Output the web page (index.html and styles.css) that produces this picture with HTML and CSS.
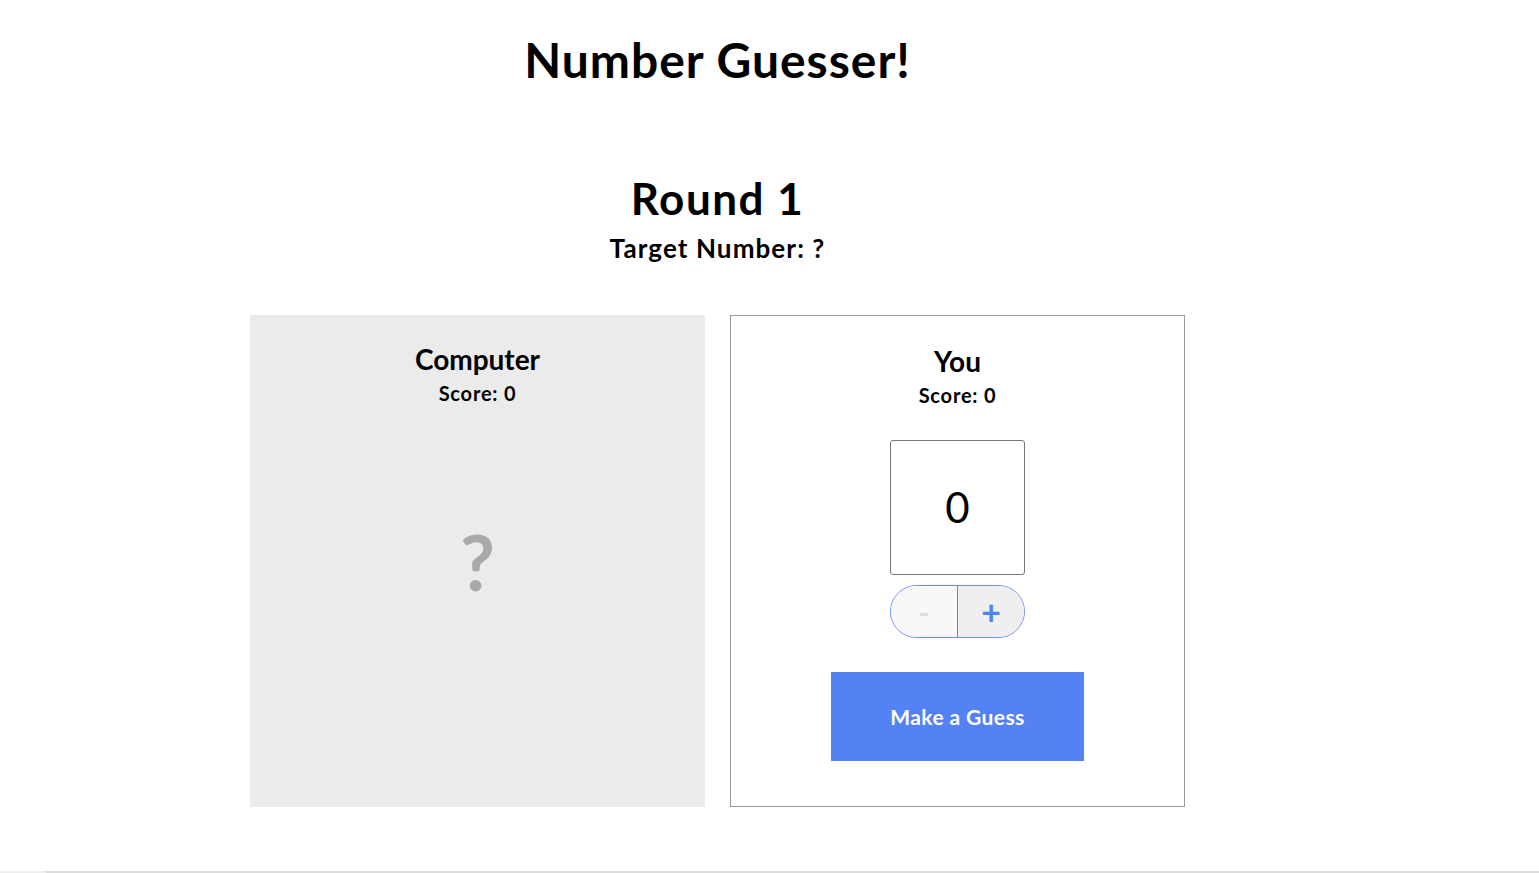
FILE: index.html
```html
<!DOCTYPE html>
<html lang="en">
<head>
<meta charset="utf-8">
<title>Number Guesser!</title>
<link rel="stylesheet" href="styles.css">
</head>
<body>
<div class="page">
  <h1 class="title">Number Guesser!</h1>
  <section class="round">
    <h2 class="round-title">Round 1</h2>
    <p class="target">Target Number: ?</p>
  </section>
  <section class="players">
    <div class="card card-computer">
      <h3 class="card-name">Computer</h3>
      <p class="card-score">Score: 0</p>
      <div class="computer-guess">?</div>
    </div>
    <div class="card card-human">
      <h3 class="card-name">You</h3>
      <p class="card-score">Score: 0</p>
      <input class="guess-input" type="text" value="0">
      <div class="stepper">
        <button class="step step-minus" type="button">-</button>
        <button class="step step-plus" type="button">+</button>
      </div>
      <button class="guess-btn" type="button">Make a Guess</button>
    </div>
  </section>
</div>
<div class="bottom-rule"><span class="rule-start"></span><span class="rule-rest"></span></div>
</body>
</html>
```
FILE: styles.css
```css
html, body {
  margin: 0;
  padding: 0;
  background: #fff;
}
body {
  font-family: "Lato", "Noto Sans", sans-serif;
  color: #000;
  overflow: hidden;
  height: 873px;
}
.page {
  width: 1435px;
  display: flex;
  flex-direction: column;
  align-items: center;
}
.title {
  margin: 31px 0 0;
  font-size: 48px;
  line-height: 58px;
  font-weight: 700;
  letter-spacing: 1px;
}
.round {
  margin-top: 85px;
  display: flex;
  flex-direction: column;
  align-items: center;
}
.round-title {
  margin: 0;
  font-size: 44px;
  line-height: 48px;
  font-weight: 700;
  letter-spacing: 1.5px;
}
.target {
  margin: 12px 0 0;
  font-size: 26px;
  line-height: 29px;
  font-weight: 700;
  letter-spacing: 1.1px;
}
.players {
  margin-top: 52px;
  display: flex;
  gap: 25px;
}
.card {
  width: 455px;
  height: 492px;
  box-sizing: border-box;
  display: flex;
  flex-direction: column;
  align-items: center;
  padding-top: 27px;
}
.card-computer {
  background: #ebebeb;
}
.card-human {
  border: 1px solid #999;
  padding-top: 28px;
}
.card-name {
  margin: 0 0 5px;
  font-size: 28px;
  line-height: 34px;
  font-weight: 700;
}
.card-score {
  margin: 0;
  font-size: 20px;
  line-height: 24px;
  font-weight: 700;
  letter-spacing: 0.8px;
}
.computer-guess {
  flex: 1;
  display: flex;
  align-items: center;
  justify-content: center;
  font-size: 76px;
  font-weight: 700;
  color: #a9a9a9;
  padding-bottom: 90px;
}
.guess-input {
  margin-top: 33px;
  width: 135px;
  height: 135px;
  box-sizing: border-box;
  border: 1px solid #777;
  border-radius: 3px;
  font-family: "Lato", "Noto Sans", sans-serif;
  font-size: 42px;
  font-weight: 400;
  text-align: center;
  color: #000;
  padding: 0 0 2px;
  background: #fff;
}
.stepper {
  margin-top: 10px;
  width: 135px;
  height: 53px;
  box-sizing: border-box;
  border: 1px solid #6a8ff2;
  border-radius: 27px;
  display: flex;
  overflow: hidden;
}
.step {
  flex: 1;
  border: 0;
  margin: 0;
  padding: 0;
  font-family: "Lato", "Noto Sans", sans-serif;
  font-weight: 700;
  line-height: 1;
}
.step-minus {
  background: #f8f8f8;
  color: #dcdcdc;
  font-size: 30px;
  border-right: 1px solid #5c84f0;
}
.step-plus {
  background: #efefef;
  color: #5481f4;
  font-size: 34px;
}
.guess-btn {
  margin-top: 34px;
  width: 253px;
  height: 89px;
  border: 0;
  background: #5481f4;
  color: #fff;
  font-family: "Lato", "Noto Sans", sans-serif;
  font-size: 21px;
  font-weight: 700;
  letter-spacing: 0.4px;
}
.bottom-rule {
  margin-top: 64px;
  height: 2px;
  display: flex;
}
.rule-start {
  width: 46px;
  background: #efefef;
}
.rule-rest {
  flex: 1;
  background: #dcdcdc;
}
```
